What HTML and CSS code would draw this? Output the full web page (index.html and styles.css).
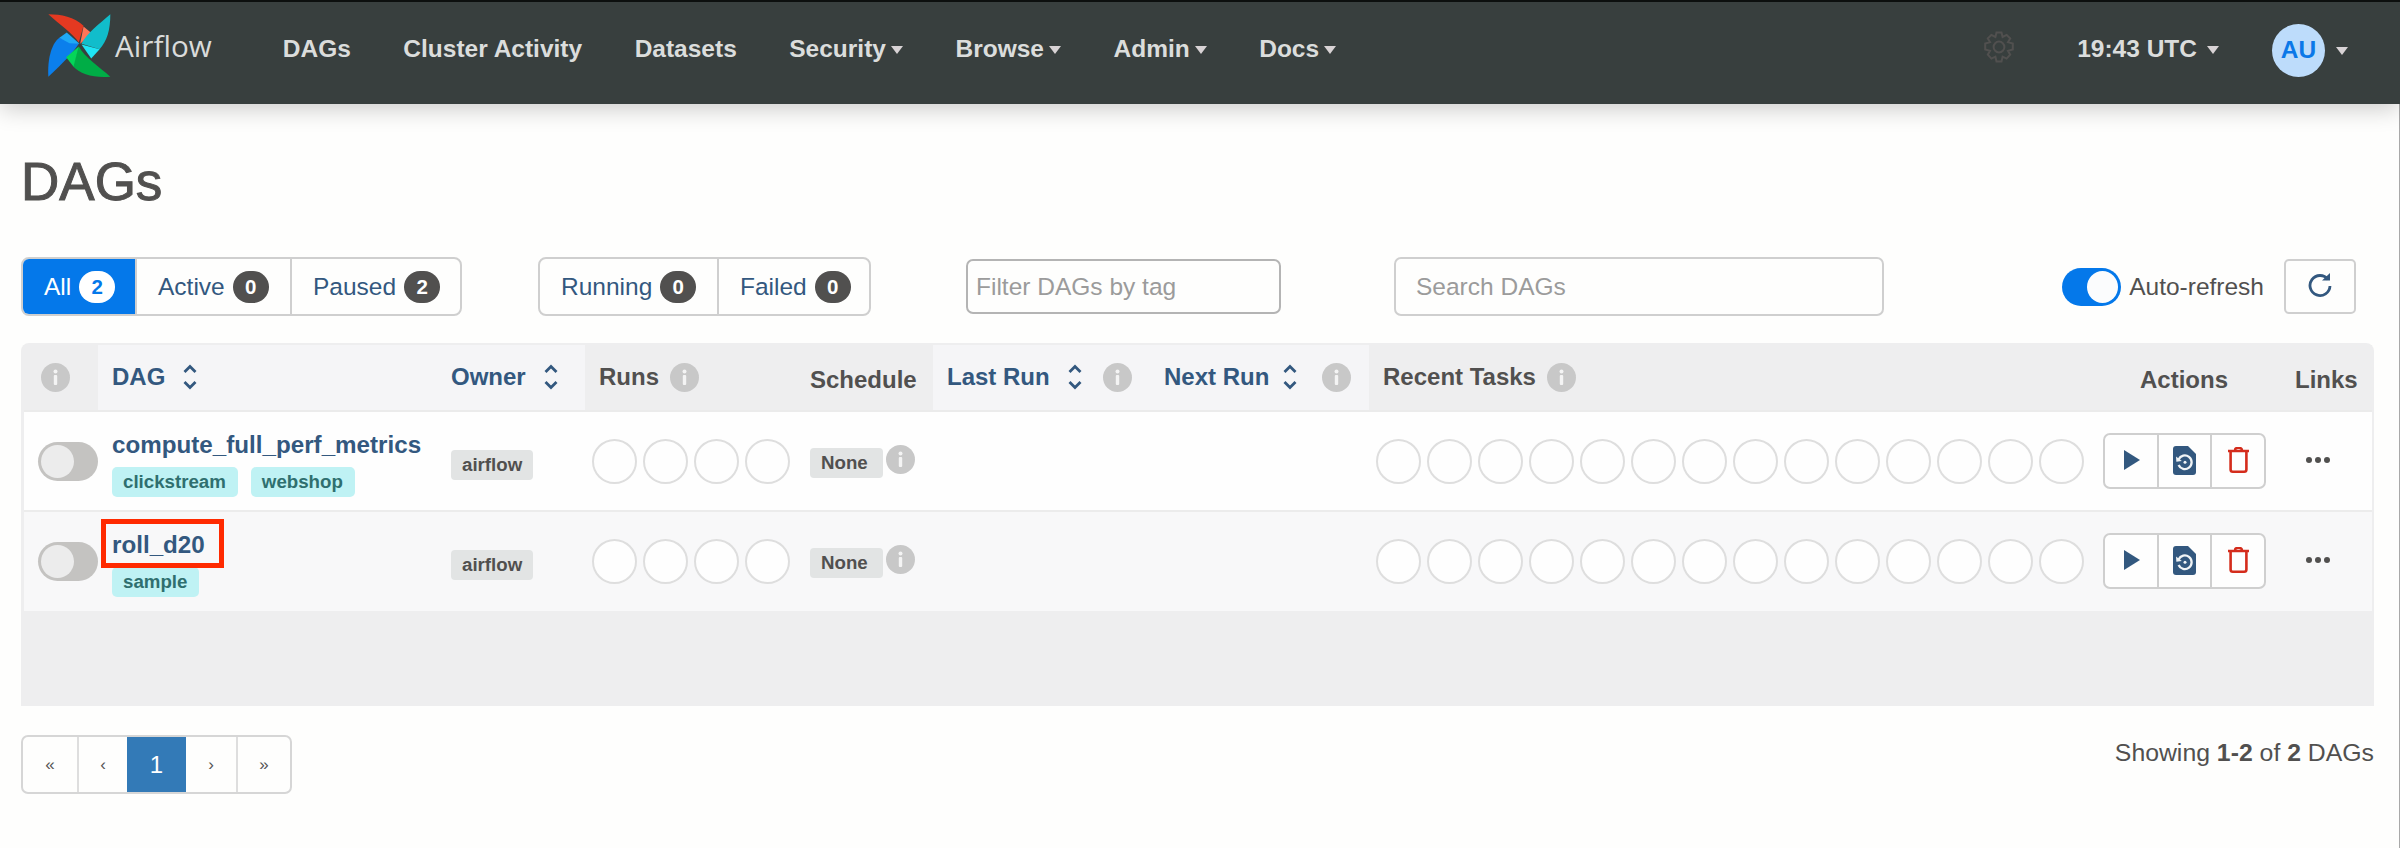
FILE: index.html
```html
<!DOCTYPE html>
<html lang="en">
<head>
<meta charset="utf-8">
<title>DAGs - Airflow</title>
<link rel="stylesheet" href="styles.css">
</head>
<body>
<svg class="defs" width="0" height="0" aria-hidden="true">
  <defs>
    <symbol id="info" viewBox="0 0 29 29"><circle cx="14.5" cy="14.5" r="14.5" fill="#c8c8c8"/><rect x="12.8" y="12" width="3.4" height="10" rx="1" fill="#f4f4f4"/><circle cx="14.5" cy="8.4" r="2" fill="#f4f4f4"/></symbol>
    <symbol id="sort" viewBox="0 0 14 26"><path d="M1.5 8 L7 2.5 L12.5 8 M1.5 18 L7 23.5 L12.5 18" fill="none" stroke="#33587f" stroke-width="2.8"/></symbol>
    <symbol id="play" viewBox="0 0 16 20"><path d="M0 0 L16 10 L0 20 Z" fill="#33587f"/></symbol>
    <symbol id="file" viewBox="0 0 23 29"><path d="M3 0 H15 L23 8 V26 a3 3 0 0 1 -3 3 H3 a3 3 0 0 1 -3 -3 V3 a3 3 0 0 1 3 -3 Z" fill="#33587f"/><path d="M5.6 13.5 A6.8 6.8 0 1 1 5.6 19" fill="none" stroke="#f1f4f6" stroke-width="2.3"/><path d="M3 10.5 L3.4 15.8 L8.8 15 Z" fill="#f1f4f6"/><circle cx="12" cy="16.2" r="1.5" fill="#f1f4f6"/></symbol>
    <symbol id="trash" viewBox="0 0 21 26"><path d="M0 4 H21 M7 3 Q7 .8 10.5 .8 Q14 .8 14 3" fill="none" stroke="#d42c1c" stroke-width="2.4"/><path d="M2.6 5 V22.5 a2.2 2.2 0 0 0 2.2 2.2 H16.2 a2.2 2.2 0 0 0 2.2 -2.2 V5" fill="none" stroke="#d42c1c" stroke-width="2.6"/></symbol>
  </defs>
</svg>

<header class="navbar">
  <a class="brand">
    <svg class="logo" viewBox="80 35 200 200" aria-hidden="true">
      <path d="M87 42 C125 42 165 50 192 76 L178 126 C160 100 120 72 87 42 Z" fill="#e43921"/>
      <path d="M192 78 L218 100 L182 130 Z" fill="#ff7557"/>
      <path d="M272 42 C272 90 262 122 240 146 L186 130 C200 100 240 70 272 42 Z" fill="#11bdcb"/>
      <path d="M186 132 L240 146 L215 174 Z" fill="#1fe5f5"/>
      <path d="M87 228 C84 180 95 130 120 112 L178 130 C165 150 130 190 87 228 Z" fill="#0b7fec"/>
      <path d="M120 112 L142 96 L180 130 L150 128 Z" fill="#1fa9f5"/>
      <path d="M272 228 C225 232 182 222 160 196 L178 138 C195 170 240 200 272 228 Z" fill="#00ad46"/>
      <path d="M178 138 L140 170 L162 198 Z" fill="#04d659"/>
    </svg>
    <span class="brand-name">Airflow</span>
  </a>
  <nav class="nav-main">
    <a class="nav-link">DAGs</a>
    <a class="nav-link">Cluster Activity</a>
    <a class="nav-link">Datasets</a>
    <a class="nav-link">Security<i class="caret"></i></a>
    <a class="nav-link">Browse<i class="caret"></i></a>
    <a class="nav-link">Admin<i class="caret"></i></a>
    <a class="nav-link">Docs<i class="caret"></i></a>
  </nav>
  <div class="nav-right">
    <svg class="gear" viewBox="0 0 30 32" aria-hidden="true"><path d="M12.5 1.5 H17.5 L18.6 6 L22.6 3.9 L26.2 7.5 L24 11.2 L28.8 12.6 V18.4 L24 19.8 L26.2 23.7 L22.6 27.6 L18.6 25.6 L17.5 30.5 H12.5 L11.4 25.6 L7.4 27.6 L3.8 23.7 L6 19.8 L1.2 18.4 V12.6 L6 11.2 L3.8 7.5 L7.4 3.9 L11.4 6 Z" fill="none" stroke="#51504f" stroke-width="2"/><circle cx="15" cy="16" r="5.4" fill="none" stroke="#51504f" stroke-width="2"/></svg>
    <a class="nav-link clock">19:43 UTC<i class="caret caret-wide"></i></a>
    <span class="avatar">AU</span>
    <i class="caret caret-user"></i>
  </div>
</header>

<main class="page">
  <h1 class="title">DAGs</h1>

  <div class="toolbar">
    <div class="btn-group">
      <a class="btn btn-all active">All<span class="count">2</span></a>
      <a class="btn btn-active">Active<span class="count">0</span></a>
      <a class="btn btn-paused">Paused<span class="count">2</span></a>
    </div>
    <div class="btn-group group-status">
      <a class="btn btn-running">Running<span class="count">0</span></a>
      <a class="btn btn-failed">Failed<span class="count">0</span></a>
    </div>
    <input class="field field-tag" placeholder="Filter DAGs by tag">
    <input class="field field-search" placeholder="Search DAGs">
    <div class="refresh">
      <span class="switch on"><i class="knob"></i></span>
      <span class="refresh-label">Auto-refresh</span>
      <button class="refresh-btn" aria-label="Refresh">
        <svg class="refresh-icon" viewBox="0 0 24 24" aria-hidden="true"><path d="M20 6.5 A10 10 0 1 0 22 13" fill="none" stroke="#33587f" stroke-width="2.8"/><path d="M14 7.5 H22 V0 Z" fill="#33587f"/></svg>
      </button>
    </div>
  </div>

  <section class="panel">
    <table class="dags">
      <thead>
        <tr>
          <th class="c-toggle plain"><svg class="info"><use href="#info"/></svg></th>
          <th class="c-dag sortable"><span class="th"><span class="link">DAG</span><svg class="sort"><use href="#sort"/></svg></span></th>
          <th class="c-owner sortable"><span class="th"><span class="link">Owner</span><svg class="sort"><use href="#sort"/></svg></span></th>
          <th class="c-runs plain"><span class="th th-near">Runs<svg class="info"><use href="#info"/></svg></span></th>
          <th class="c-schedule plain low">Schedule</th>
          <th class="c-last sortable"><span class="th"><span class="link">Last Run</span><svg class="sort"><use href="#sort"/></svg><svg class="info info-far"><use href="#info"/></svg></span></th>
          <th class="c-next sortable"><span class="th th-tight"><span class="link">Next Run</span><svg class="sort"><use href="#sort"/></svg><svg class="info info-far"><use href="#info"/></svg></span></th>
          <th class="c-recent plain"><span class="th th-near">Recent Tasks<svg class="info"><use href="#info"/></svg></span></th>
          <th class="c-actions plain low">Actions</th>
          <th class="c-links plain low">Links</th>
        </tr>
      </thead>
      <tbody>
        <tr>
          <td class="cell-toggle"><span class="switch"><i class="knob"></i></span></td>
          <td class="cell-dag">
            <a class="dag-name">compute_full_perf_metrics</a>
            <div class="tags"><span class="tag">clickstream</span><span class="tag">webshop</span></div>
          </td>
          <td class="cell-owner"><span class="label">airflow</span></td>
          <td class="cell-circles"><div class="circles"><i></i><i></i><i></i><i></i></div></td>
          <td class="cell-schedule"><div class="sched"><span class="label label-none">None</span><svg class="info"><use href="#info"/></svg></div></td>
          <td></td>
          <td></td>
          <td class="cell-circles"><div class="circles"><i></i><i></i><i></i><i></i><i></i><i></i><i></i><i></i><i></i><i></i><i></i><i></i><i></i><i></i></div></td>
          <td class="cell-actions">
            <div class="act-group">
              <a class="act"><svg class="ic-play"><use href="#play"/></svg></a>
              <a class="act"><svg class="ic-file"><use href="#file"/></svg></a>
              <a class="act"><svg class="ic-trash"><use href="#trash"/></svg></a>
            </div>
          </td>
          <td class="cell-links"><span class="dots"><i></i><i></i><i></i></span></td>
        </tr>
        <tr class="alt">
          <td class="cell-toggle"><span class="switch"><i class="knob"></i></span></td>
          <td class="cell-dag">
            <a class="dag-name marked">roll_d20</a>
            <div class="tags"><span class="tag">sample</span></div>
          </td>
          <td class="cell-owner"><span class="label">airflow</span></td>
          <td class="cell-circles"><div class="circles"><i></i><i></i><i></i><i></i></div></td>
          <td class="cell-schedule"><div class="sched"><span class="label label-none">None</span><svg class="info"><use href="#info"/></svg></div></td>
          <td></td>
          <td></td>
          <td class="cell-circles"><div class="circles"><i></i><i></i><i></i><i></i><i></i><i></i><i></i><i></i><i></i><i></i><i></i><i></i><i></i><i></i></div></td>
          <td class="cell-actions">
            <div class="act-group">
              <a class="act"><svg class="ic-play"><use href="#play"/></svg></a>
              <a class="act"><svg class="ic-file"><use href="#file"/></svg></a>
              <a class="act"><svg class="ic-trash"><use href="#trash"/></svg></a>
            </div>
          </td>
          <td class="cell-links"><span class="dots"><i></i><i></i><i></i></span></td>
        </tr>
      </tbody>
    </table>
  </section>

  <footer class="foot">
    <div class="pager">
      <a class="pg pg-first">«</a>
      <a class="pg pg-prev">‹</a>
      <a class="pg pg-cur">1</a>
      <a class="pg pg-next">›</a>
      <a class="pg pg-last">»</a>
    </div>
    <p class="showing">Showing <b>1-2</b> of <b>2</b> DAGs</p>
  </footer>
</main>
</body>
</html>
```

FILE: styles.css
```css
* { box-sizing: border-box; }
html, body { margin: 0; padding: 0; }
body {
  height: 848px;
  overflow: hidden;
  background: #fefefd;
  color: #51504f;
  font-family: "Liberation Sans", Arial, sans-serif;
  font-size: 24.5px;
}
a { text-decoration: none; color: inherit; }
.defs { position: absolute; }

/* navbar */
.navbar {
  position: relative;
  z-index: 2;
  display: flex;
  align-items: center;
  height: 104px;
  padding: 0 52px 8px 48px;
  background: #383f3e;
  border-top: 2px solid #0c0f0e;
  box-shadow: 0 5px 22px rgba(0, 0, 0, 0.2);
}
.brand { display: flex; align-items: center; margin-bottom: 8px; }
.logo { width: 67px; height: 67px; margin-left: -2px; }
.brand-name {
  margin-left: 2px;
  color: #d9dbda;
  font-family: "Open Sans", sans-serif;
  font-size: 29.7px;
}
.nav-main { display: flex; gap: 52.5px; margin-left: 71px; }
.nav-link {
  display: flex;
  align-items: center;
  color: #dbdddc;
  font-weight: 700;
  white-space: nowrap;
}
.caret {
  display: inline-block;
  width: 0;
  height: 0;
  margin: 2px 0 0 5px;
  border-top: 8px solid #d8d3d5;
  border-left: 6.5px solid transparent;
  border-right: 6.5px solid transparent;
}
.caret-wide { margin-left: 10px; }
.caret-user { margin: 4px 0 0 11px; }
.nav-right { display: flex; align-items: center; margin-left: auto; }
.gear { width: 30px; height: 32px; margin: 0 63px 4px 0; }
.avatar {
  display: flex;
  align-items: center;
  justify-content: center;
  width: 53px;
  height: 53px;
  margin: 2px 0 0 53px;
  border-radius: 50%;
  background: #bddcfb;
  color: #0b78e8;
  font-weight: 700;
}

/* page */
.page { height: 744px; padding: 48px 25px 0 21px; border-right: 1px solid #a9a9a9; }
.title {
  margin: 0 0 45px;
  color: #51504f;
  font-size: 53px;
  font-weight: 400;
  line-height: 60px;
  -webkit-text-stroke: 1px #51504f;
}

/* toolbar */
.toolbar { display: flex; align-items: center; height: 59px; }
.btn-group {
  display: flex;
  height: 59px;
  border: 2px solid #cfcfcf;
  border-radius: 8px;
  overflow: hidden;
}
.group-status { margin-left: 76px; }
.btn {
  display: flex;
  align-items: center;
  padding-left: 21px;
  color: #33587f;
  border-left: 2px solid #cfcfcf;
}
.btn:first-child { border-left: 0; }
.btn-all { width: 112px; }
.btn-active { width: 155px; }
.btn-paused { width: 170px; }
.btn-running { width: 177px; }
.btn-failed { width: 152px; }
.btn.active { background: #0478ea; color: #fff; margin: -2px 0 -2px -2px; padding-left: 23px; width: 114px; }
.count {
  display: inline-flex;
  align-items: center;
  justify-content: center;
  width: 36px;
  height: 32px;
  margin-left: 8px;
  border-radius: 16px;
  background: #51504f;
  color: #fff;
  font-size: 20.5px;
  font-weight: 700;
}
.active .count { background: #fff; color: #0478ea; }
.field {
  font: inherit;
  color: #51504f;
  background: #fefefd;
  border-radius: 7px;
  outline: 0;
}
.field::placeholder { color: #9b9b9b; opacity: 1; }
.field-tag {
  width: 315px;
  height: 55px;
  margin-left: 95px;
  padding: 0 8px;
  border: 2px solid #b4b4b4;
}
.field-search {
  width: 490px;
  height: 59px;
  margin-left: 113px;
  padding: 0 20px;
  border: 2px solid #cfcfcf;
}
.refresh { display: flex; align-items: center; margin-left: auto; margin-right: 18px; }
.switch {
  display: flex;
  align-items: center;
  width: 60px;
  height: 39px;
  padding: 0 3px;
  border-radius: 20px;
  background: #c4c3c1;
}
.knob { width: 33px; height: 33px; border-radius: 50%; background: #ececec; }
.switch.on { width: 59px; height: 38px; justify-content: flex-end; background: #0478ea; }
.switch.on .knob { width: 31px; height: 32px; background: #fbfcfd; }
.refresh-label { margin-left: 8px; color: #51504f; }
.refresh-btn {
  display: flex;
  align-items: center;
  justify-content: center;
  width: 72px;
  height: 55px;
  margin-left: 20px;
  padding: 0;
  background: #fefefd;
  border: 2px solid #cfcfcf;
  border-radius: 5px;
}
.refresh-icon { width: 24px; height: 24px; margin-bottom: 4px; }

/* table */
.panel {
  height: 363px;
  margin-top: 27px;
  padding: 2px 2px 0 3px;
  background: #eeeeef;
  border-radius: 8px 8px 0 0;
}
.dags { width: 2348px; table-layout: fixed; border-collapse: separate; border-spacing: 0; }
.dags th {
  height: 67px;
  padding: 0 14px 1px;
  border-bottom: 2px solid #ebebeb;
  font-size: 24px;
  font-weight: 700;
  text-align: left;
  vertical-align: middle;
  white-space: nowrap;
}
.dags th.low { padding-top: 5px; }
.plain { background: #eeeeef; }
.sortable { background: #f5f5f7; }
.c-toggle { width: 74px; }
.c-dag { width: 339px; }
.c-owner { width: 148px; }
.c-runs { width: 211px; }
.c-schedule { width: 137px; }
.c-last { width: 217px; }
.c-next { width: 219px; }
.c-recent { width: 722px; }
.c-actions { width: 188px; }
.c-links { width: 93px; }
.dags th.c-toggle { padding: 0 0 1px 17px; }
.dags th.c-actions { padding-left: 49px; padding-right: 0; }
.dags th.c-links { padding-left: 16px; padding-right: 0; }
.th { display: flex; align-items: center; }
.th-near { gap: 11px; }
.link { color: #33587f; }
.info { display: block; flex: none; width: 29px; height: 29px; }
.sort { display: block; flex: none; width: 14px; height: 26px; margin-left: 18px; }
.info-far { margin-left: 21px; }
.th-tight .sort { margin-left: 14px; }
.th-tight .info-far { margin-left: 25px; }

.dags td {
  height: 100px;
  padding: 0 14px;
  background: #fefefe;
  border-bottom: 2px solid #ececec;
  vertical-align: top;
}
.dags .alt td { background: #f8f8f9; border-bottom: 0; height: 99px; }
.dags td.cell-toggle { padding: 30px 0 0 14px; }
.dags td.cell-dag { padding-top: 18px; }
.dag-name {
  display: block;
  width: max-content;
  position: relative;
  color: #33587f;
  font-size: 24.2px;
  font-weight: 700;
  line-height: 30px;
}
.marked::after {
  content: "";
  box-sizing: border-box;
  position: absolute;
  left: -11px;
  top: -11px;
  width: 123px;
  height: 49px;
  border: 5px solid #ff2a00;
}
.tags { display: flex; gap: 13px; margin-top: 7px; }
.tag {
  display: block;
  height: 30px;
  padding: 0 12px 0 11px;
  border-radius: 5px;
  background: #bff2f4;
  color: #2f6f6f;
  font-size: 18.7px;
  font-weight: 700;
  line-height: 30px;
}
.dags td.cell-owner { padding-top: 37px; }
.label {
  display: inline-block;
  height: 30px;
  padding: 0 11px;
  border-radius: 4px;
  background: #e2e4e4;
  color: #51504f;
  font-size: 18.7px;
  font-weight: 700;
  line-height: 30px;
}
.dags td.cell-circles { padding: 27px 0 0 7px; }
.circles { display: flex; gap: 6px; }
.circles i {
  display: block;
  flex: none;
  width: 45px;
  height: 45px;
  border: 2px solid #dedede;
  border-radius: 50%;
  background: #fefefe;
}
.dags td.cell-schedule { padding-top: 33px; }
.sched { display: flex; align-items: flex-start; gap: 3px; }
.label-none { width: 73px; margin-top: 3px; }
.dags td.cell-actions { padding: 21px 0 0 12px; }
.act-group {
  display: flex;
  width: 163px;
  height: 56px;
  border: 2px solid #cfcfcf;
  border-radius: 7px;
  background: #fefefe;
}
.act {
  display: flex;
  flex: 1;
  align-items: center;
  justify-content: center;
  border-left: 2px solid #cfcfcf;
}
.act:first-child { border-left: 0; }
.ic-play { width: 16px; height: 20px; margin: -3px 0 0 3px; }
.ic-file { width: 23px; height: 29px; margin-top: -2px; }
.ic-trash { width: 21px; height: 26px; margin-top: -2px; }
.dags td.cell-links { padding: 0 0 0 27px; }
.dots { display: flex; gap: 3px; margin-top: 45px; }
.dots i { display: block; width: 6px; height: 6px; border-radius: 50%; background: #51504f; }

/* footer */
.foot { display: flex; justify-content: space-between; align-items: flex-start; margin-top: 29px; }
.pager {
  display: flex;
  height: 59px;
  border: 2px solid #d6d6d6;
  border-radius: 7px;
  overflow: hidden;
}
.pg {
  display: flex;
  align-items: center;
  justify-content: center;
  border-left: 2px solid #dedede;
  color: #555;
  font-size: 17px;
}
.pg-first { width: 54px; border-left: 0; }
.pg-prev { width: 50px; }
.pg-cur { width: 59px; border-left: 0; background: #337ab7; color: #fff; font-size: 24px; margin: -2px 0; }
.pg-next { width: 50px; border-left: 0; }
.pg-last { width: 54px; }
.showing { margin: 4px 0 0; font-size: 24.8px; line-height: 28px; color: #51504f; }
```
